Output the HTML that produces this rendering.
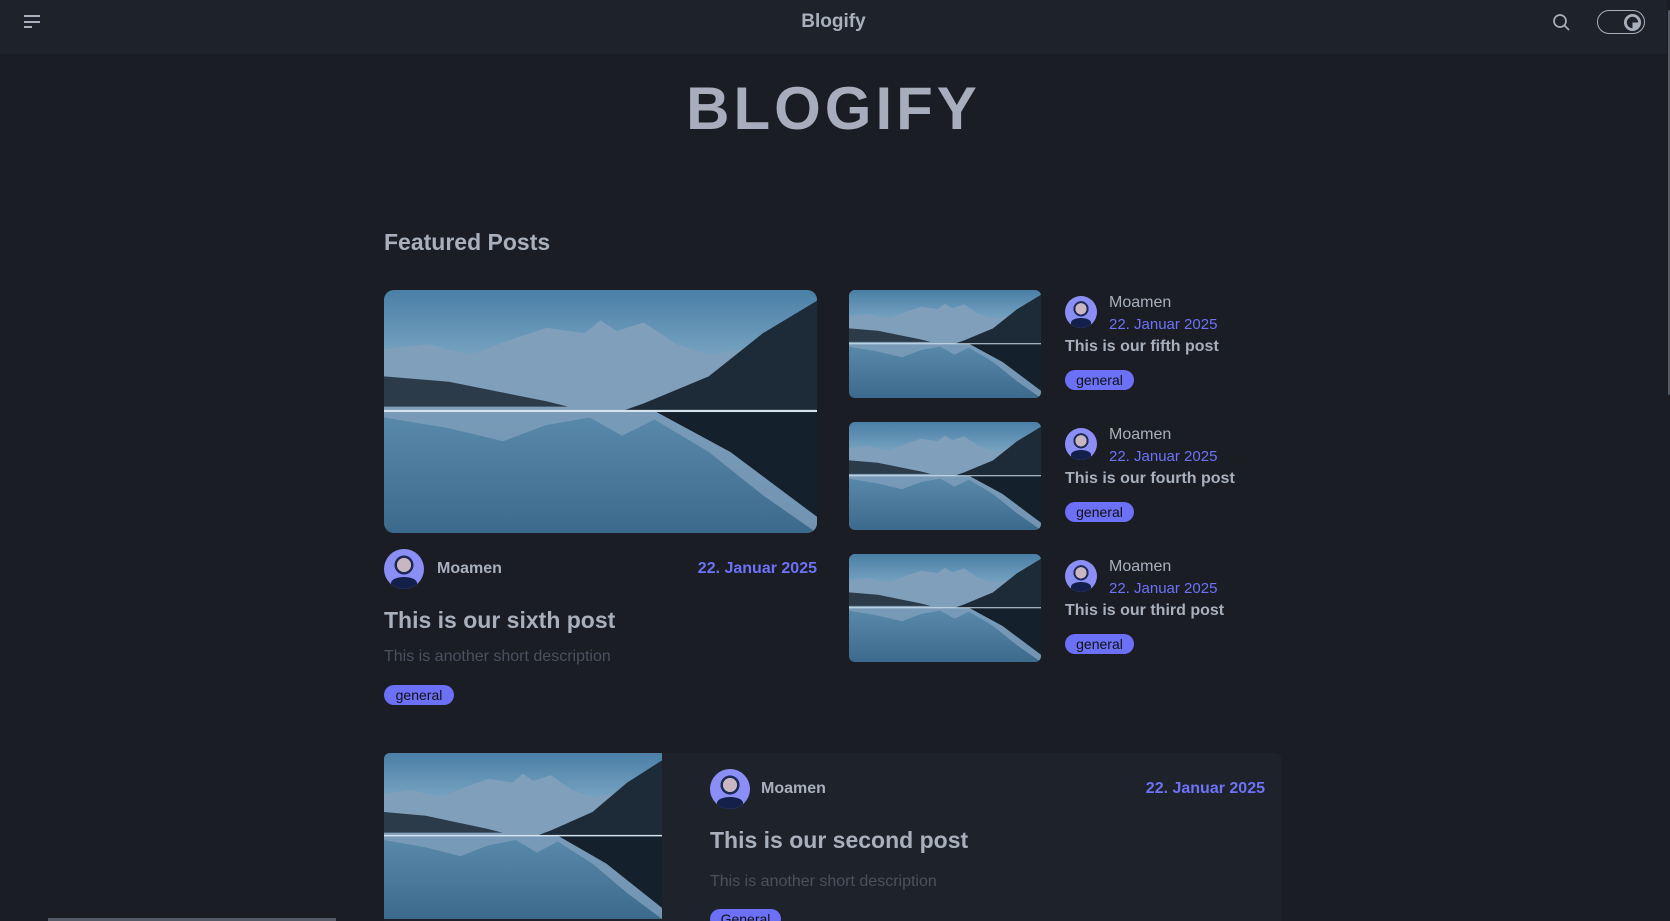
<!DOCTYPE html>
<html><head><meta charset="utf-8"><style>
*{margin:0;padding:0;box-sizing:border-box}
html,body{width:1670px;height:921px;overflow:hidden}
body{background:#1a1d24;font-family:"Liberation Sans",sans-serif;position:relative}
.nav{position:absolute;left:0;top:0;width:1667px;height:54px;background:#1e232b}
.abs{position:absolute}
.img{position:absolute;overflow:hidden}
.img svg{width:100%;height:100%;display:block}
.av{position:absolute;border-radius:50%;overflow:hidden;background:radial-gradient(circle at 50% 40%,#c9b6c0 0 22%,#1c2a55 23% 30%,#8b8ff5 31%)}
.av:after{content:"";position:absolute;left:18%;right:18%;bottom:0;height:30%;background:#14204a;border-radius:50% 50% 0 0}
.name{position:absolute;color:#a9b0bd;font-weight:bold}
.date{position:absolute;color:#6d72f7;font-weight:bold}
.tag{position:absolute;background:#6b70f7;color:#111;border-radius:10px;font-size:14px;text-align:center;line-height:20px;height:20px}
.t{position:absolute;color:#a9b0bd;font-weight:bold}
</style></head><body>
<svg width="0" height="0" style="position:absolute"><defs>
<linearGradient id="sky" x1="0" y1="0" x2="0" y2="1"><stop offset="0" stop-color="#4a7fa6"/><stop offset="1" stop-color="#9cc0d6"/></linearGradient>
<linearGradient id="wat" x1="0" y1="0" x2="0" y2="1"><stop offset="0" stop-color="#2c506e"/><stop offset="0.5" stop-color="#5a8aab"/><stop offset="1" stop-color="#3c6a8c"/></linearGradient>
<symbol id="m" viewBox="0 0 400 225" preserveAspectRatio="none">
<rect width="400" height="225" fill="url(#wat)"/>
<rect width="400" height="112" fill="url(#sky)"/>
<polygon points="0,55 40,50 80,60 120,45 150,35 185,40 200,28 215,38 240,30 270,50 300,60 330,55 400,60 400,112 0,112" fill="#7f9fbb"/>
<polygon points="0,80 60,85 110,95 150,103 170,108 0,108" fill="#2b3b4a"/>
<polygon points="240,105 300,80 350,40 400,10 400,112 220,112" fill="#1d2b38"/>
<polygon points="0,118 60,128 110,140 150,125 190,118 220,135 250,120 300,150 350,190 400,225 400,112 0,112" fill="#7f9fbb" opacity=".8"/>
<polygon points="250,112 320,150 400,210 400,112" fill="#14202b"/>
<rect y="111" width="400" height="2" fill="#d5e3ee"/>
</symbol></defs></svg>
<div class="nav">
<div class="abs" style="left:24px;top:15px;width:16px;height:2px;background:#a9b0bd"></div>
<div class="abs" style="left:24px;top:21px;width:16px;height:2px;background:#a9b0bd"></div>
<div class="abs" style="left:24px;top:26px;width:8px;height:2px;background:#a9b0bd"></div>
<div class="abs" style="left:0;width:1667px;top:11px;text-align:center;color:#a9b0bd;font-weight:bold;font-size:19px">Blogify</div>
<svg class="abs" style="left:1551px;top:12px" width="22" height="22" viewBox="0 0 22 22"><circle cx="9" cy="9" r="6" fill="none" stroke="#a9b0bd" stroke-width="1.7"/><line x1="13.5" y1="13.5" x2="18" y2="18" stroke="#a9b0bd" stroke-width="1.7"/></svg>
<div class="abs" style="left:1597px;top:10px;width:48px;height:24px;border:1.5px solid #a9b0bd;border-radius:12px"></div>
<svg class="abs" style="left:1623px;top:13px" width="19" height="19" viewBox="0 0 20 20"><circle cx="10" cy="10" r="9" fill="#a9b0bd"/><path d="M10 4a6 6 0 1 0 6 6h-6z" fill="#1e232b" transform="rotate(90 10 10)"/></svg>
</div>
<div class="abs" style="left:1668px;top:10px;width:2px;height:385px;background:#555b66;border-radius:1px"></div>
<div class="abs" style="left:0;width:1667px;top:74px;text-align:center;color:#a7adbc;font-weight:bold;font-size:60px;letter-spacing:4px">BLOGIFY</div>
<div class="t" style="left:384px;top:229px;font-size:23px">Featured Posts</div>

<div class="img" style="left:384px;top:290px;width:433px;height:243px;border-radius:10px"><svg><use href="#m"/></svg></div>
<div class="av" style="left:384px;top:549px;width:40px;height:40px"></div>
<div class="name" style="left:437px;top:560px;font-size:16px">Moamen</div>
<div class="date" style="right:853px;top:560px;font-size:16px">22. Januar 2025</div>
<div class="t" style="left:384px;top:607px;font-size:23px">This is our sixth post</div>
<div class="abs" style="left:384px;top:648px;font-size:16px;color:#4a515d">This is another short description</div>
<div class="tag" style="left:384px;top:685px;width:70px">general</div>

<div class="img" style="left:849px;top:290px;width:192px;height:108px;border-radius:6px"><svg><use href="#m"/></svg></div>
<div class="av" style="left:1065px;top:296px;width:32px;height:32px"></div>
<div class="name" style="left:1109px;top:294px;font-size:16px;font-weight:normal">Moamen</div>
<div class="date" style="left:1109px;top:316px;font-size:15px;font-weight:normal">22. Januar 2025</div>
<div class="t" style="left:1065px;top:338px;font-size:16px">This is our fifth post</div>
<div class="tag" style="left:1065px;top:370px;width:69px">general</div>

<div class="img" style="left:849px;top:422px;width:192px;height:108px;border-radius:6px"><svg><use href="#m"/></svg></div>
<div class="av" style="left:1065px;top:428px;width:32px;height:32px"></div>
<div class="name" style="left:1109px;top:426px;font-size:16px;font-weight:normal">Moamen</div>
<div class="date" style="left:1109px;top:448px;font-size:15px;font-weight:normal">22. Januar 2025</div>
<div class="t" style="left:1065px;top:470px;font-size:16px">This is our fourth post</div>
<div class="tag" style="left:1065px;top:502px;width:69px">general</div>

<div class="img" style="left:849px;top:554px;width:192px;height:108px;border-radius:6px"><svg><use href="#m"/></svg></div>
<div class="av" style="left:1065px;top:560px;width:32px;height:32px"></div>
<div class="name" style="left:1109px;top:558px;font-size:16px;font-weight:normal">Moamen</div>
<div class="date" style="left:1109px;top:580px;font-size:15px;font-weight:normal">22. Januar 2025</div>
<div class="t" style="left:1065px;top:602px;font-size:16px">This is our third post</div>
<div class="tag" style="left:1065px;top:634px;width:69px">general</div>

<div class="abs" style="left:384px;top:753px;width:897px;height:200px;background:#1e232b;border-radius:6px"></div>
<div class="img" style="left:384px;top:753px;width:278px;height:166px;border-radius:6px 0 0 0"><svg><use href="#m"/></svg></div>
<div class="av" style="left:710px;top:769px;width:40px;height:40px"></div>
<div class="name" style="left:761px;top:780px;font-size:16px">Moamen</div>
<div class="date" style="right:405px;top:780px;font-size:16px">22. Januar 2025</div>
<div class="t" style="left:710px;top:827px;font-size:23px">This is our second post</div>
<div class="abs" style="left:710px;top:873px;font-size:16px;color:#4a515d">This is another short description</div>
<div class="tag" style="left:710px;top:909px;width:71px">General</div>
<div class="abs" style="left:48px;top:918px;width:288px;height:3px;background:#555b66"></div>
</body></html>
